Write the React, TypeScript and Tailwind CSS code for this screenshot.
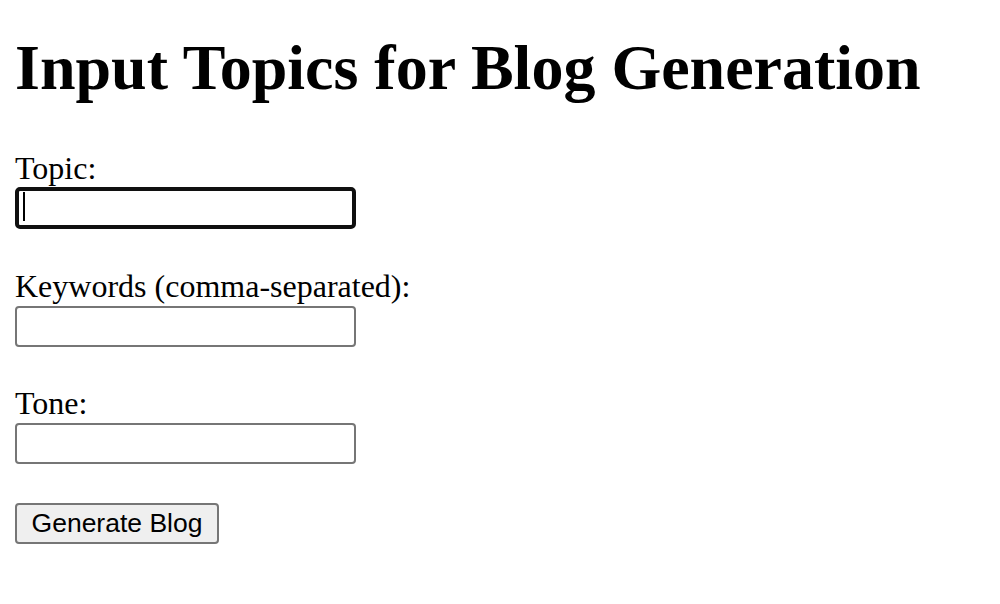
export default function App() {
    const serif = { fontFamily: '"Liberation Serif", "Times New Roman", serif' };

    return (
        <div className="min-h-screen bg-white text-black px-[15px] pb-10" style={serif}>
            <h1 className="text-[64px] leading-[73.5px] font-bold pt-[31px] mb-[45px] whitespace-nowrap">
                Input Topics for Blog Generation
            </h1>

            <form onSubmit={e => e.preventDefault()}>
                {/* Topic - focused field */}
                <div className="mb-[39px]">
                    <label htmlFor="topic" className="block text-[32px] leading-[36.8px]">Topic:</label>
                    <div className="relative mt-[1px] w-[341px] h-[42px]">
                        <input
                            id="topic"
                            type="text"
                            className="w-full h-full border-[4px] border-[#101010] rounded-[5px] outline-none bg-white px-2"
                        />
                        {/* caret */}
                        <span className="absolute left-[8px] top-[5px] w-[2px] h-[29px] bg-black" />
                    </div>
                </div>

                {/* Keywords */}
                <div className="mb-[38px]">
                    <label htmlFor="keywords" className="block text-[32px] leading-[36.8px]">Keywords (comma-separated):</label>
                    <input
                        id="keywords"
                        type="text"
                        className="block mt-[1px] w-[341px] h-[41px] border-2 border-[#767676] rounded-[4px] outline-none bg-white"
                    />
                </div>

                {/* Tone */}
                <div className="mb-[39px]">
                    <label htmlFor="tone" className="block text-[32px] leading-[36.8px]">Tone:</label>
                    <input
                        id="tone"
                        type="text"
                        className="block mt-[1px] w-[341px] h-[41px] border-2 border-[#767676] rounded-[4px] outline-none bg-white"
                    />
                </div>

                <button
                    type="submit"
                    className="flex items-center justify-center w-[204px] h-[41px] bg-[#efefef] border-2 border-[#767676] rounded-[4px] text-[26.5px] leading-none text-black"
                    style={{ fontFamily: '"Liberation Sans", Arial, sans-serif' }}
                >
                    Generate Blog
                </button>
            </form>
        </div>
    );
}
